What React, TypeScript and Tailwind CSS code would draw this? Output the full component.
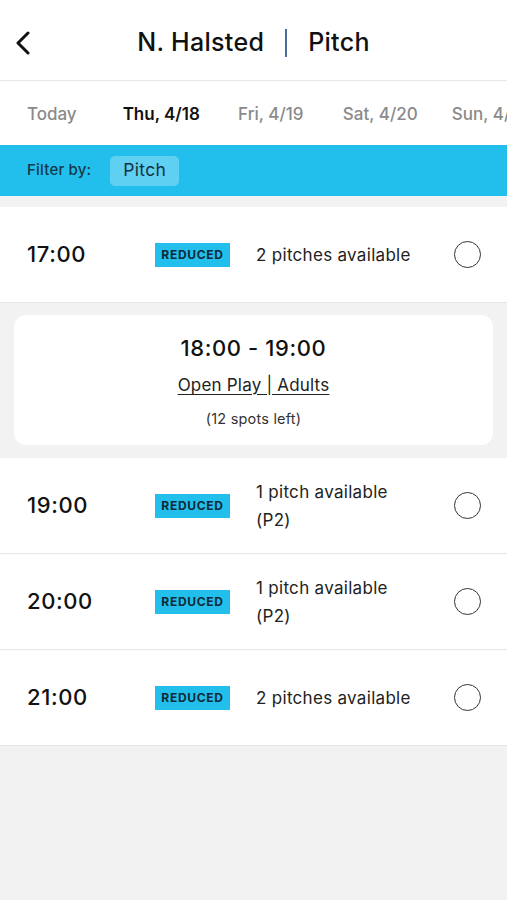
const font = { fontFamily: 'Inter, "Noto Sans", sans-serif' };

type Slot = { time: string; lines: string[] };

const slots: Slot[] = [
  { time: "19:00", lines: ["1 pitch available", "(P2)"] },
  { time: "20:00", lines: ["1 pitch available", "(P2)"] },
  { time: "21:00", lines: ["2 pitches available"] },
];

function SlotRow({ time, lines }: Slot) {
  return (
    <div className="flex items-center h-[96px] bg-white border-b border-[#e6e6e6] pl-[27px] pr-[26px]">
      <div className="w-[128px] text-[22px] font-medium text-[#111] tracking-[0.6px]">{time}</div>
      <div className="w-[75px] h-[24px] bg-[#22bfec] flex items-center justify-center text-[12px] font-bold tracking-[0.7px] text-[#0b2a3a]">
        REDUCED
      </div>
      <div className="ml-[26px] flex-1 text-[17px] leading-[28px] tracking-[0.3px] text-[#222]">
        {lines.map((l) => (
          <div key={l}>{l}</div>
        ))}
      </div>
      <div className="w-[27px] h-[27px] rounded-full border-[1.5px] border-[#333]" />
    </div>
  );
}

export default function App() {
  const tabs = ["Today", "Thu, 4/18", "Fri, 4/19", "Sat, 4/20", "Sun, 4/21"];
  return (
    <div style={font} className="min-h-[900px] w-[507px] bg-[#f2f2f2] overflow-hidden">
      {/* Header */}
      <div className="relative h-[81px] bg-white border-b border-[#e8e8e8] flex items-center justify-center">
        <svg className="absolute left-[13px] top-[31px]" width="20" height="24" viewBox="0 0 20 24" fill="none">
          <path d="M15 2 L5 12 L15 22" stroke="#111" strokeWidth="3" strokeLinecap="round" strokeLinejoin="round" />
        </svg>
        <div className="flex items-center text-[25px] font-medium tracking-[0.3px] text-[#111] pt-[6px]">
          <span>N. Halsted</span>
          <span className="mx-[21px] w-[2px] h-[28px] bg-[#4a6d9c]" />
          <span>Pitch</span>
        </div>
      </div>

      {/* Date tabs */}
      <div className="h-[64px] bg-white flex items-center whitespace-nowrap ml-[-3px] pt-[4px]">
        {tabs.map((t, i) => (
          <div
            key={t}
            className={
              i === 1
                ? "w-[109.5px] shrink-0 text-center text-[17px] font-semibold text-[#111]"
                : "w-[109.5px] shrink-0 text-center text-[17px] font-medium text-[#8a8a8a]"
            }
          >
            {t}
          </div>
        ))}
      </div>

      {/* Filter bar */}
      <div className="h-[51px] bg-[#22bfec] flex items-center pl-[27px]">
        <span className="text-[15px] font-medium tracking-[0.2px] text-[#15374a]">Filter by:</span>
        <span className="ml-[19px] h-[30px] px-[13px] rounded-[5px] bg-[#5fd0f2] flex items-center text-[17.5px] tracking-[0.3px] text-[#12303f]">
          Pitch
        </span>
      </div>

      <div className="pt-[11px]">
        <SlotRow time="17:00" lines={["2 pitches available"]} />

        <div className="px-[14px] pt-[12px] pb-[13px]">
          <div className="bg-white rounded-[12px] h-[130px] flex flex-col items-center pt-[17px]">
            <div className="text-[22px] font-medium tracking-[0.6px] text-[#111]">18:00 - 19:00</div>
            <div className="mt-[8px] text-[17px] tracking-[0.2px] text-[#222] underline underline-offset-[3px]">Open Play | Adults</div>
            <div className="mt-[9px] text-[14.5px] tracking-[0.2px] text-[#333]">(12 spots left)</div>
          </div>
        </div>

        {slots.map((s) => (
          <SlotRow key={s.time} {...s} />
        ))}
      </div>
    </div>
  );
}
